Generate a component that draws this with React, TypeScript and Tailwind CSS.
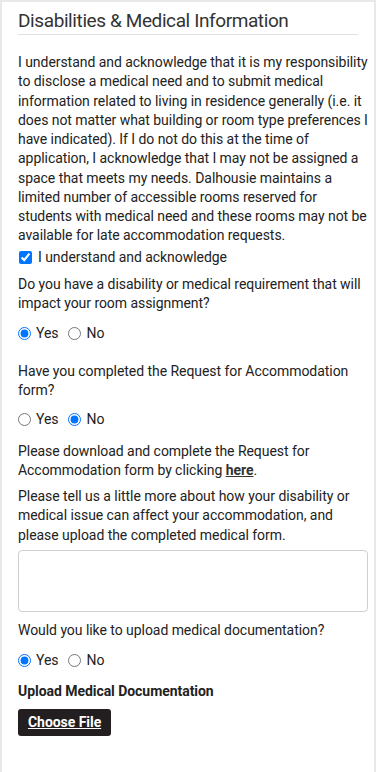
import React from 'react'

const font = { fontFamily: 'Roboto, "Noto Sans", Arial, sans-serif' }

function RadioPair({ name, yes }: { name: string; yes: boolean }) {
  return (
    <div className="flex items-center h-[20px] text-[14px] text-[#222]">
      <label className="flex items-center">
        <input
          type="radio"
          name={name}
          defaultChecked={yes}
          className="m-0 w-[13px] h-[13px] accent-[#0075ff]"
        />
        <span className="ml-[5px]">Yes</span>
      </label>
      <label className="flex items-center ml-[10px]">
        <input
          type="radio"
          name={name}
          defaultChecked={!yes}
          className="m-0 w-[13px] h-[13px] accent-[#0075ff]"
        />
        <span className="ml-[5px]">No</span>
      </label>
    </div>
  )
}

export default function App() {
  return (
    <div className="bg-white w-[380px] h-[772px] overflow-hidden" style={font}>
      <div className="w-[376px] min-h-[772px] border-2 border-b-0 border-[#e8e8e8] pl-[16px] tracking-[-0.05px]">
        <div className="mr-[16px] border-b border-[#e0e0e0] pt-[6px]">
          <h2 className="text-[19px] leading-[26px] text-[#333] font-normal tracking-[-0.4px]">
            Disabilities &amp; Medical Information
          </h2>
        </div>

        <p className="mt-[18px] text-[14px] leading-[19.25px] text-[#222]">
          I understand and acknowledge that it is my responsibility to disclose a medical need and to
          submit medical information related to living in residence generally (i.e. it does not matter
          what building or room type preferences I have indicated). If I do not do this at the time of
          application, I acknowledge that I may not be assigned a space that meets my needs. Dalhousie
          maintains a limited number of accessible rooms reserved for students with medical need and
          these rooms may not be available for late accommodation requests.
        </p>

        <label className="mt-[2px] flex items-center h-[20px] text-[14px] text-[#222]">
          <input
            type="checkbox"
            defaultChecked
            className="m-0 ml-[1px] w-[13px] h-[13px] accent-[#0075ff]"
          />
          <span className="ml-[6px]">I understand and acknowledge</span>
        </label>

        <p className="mt-[7px] text-[14px] leading-[19.25px] text-[#222]">
          Do you have a disability or medical requirement that will impact your room assignment?
        </p>
        <div className="mt-[10px]">
          <RadioPair name="disability" yes />
        </div>

        <p className="mt-[19px] text-[14px] leading-[19.25px] text-[#222]">
          Have you completed the Request for Accommodation form?
        </p>
        <div className="mt-[9px]">
          <RadioPair name="request" yes={false} />
        </div>

        <p className="mt-[12px] text-[14px] leading-[19.25px] text-[#222]">
          Please download and complete the Request for Accommodation form by clicking{' '}
          <a href="#" className="font-bold underline text-[#333]">
            here
          </a>
          .
        </p>

        <p className="mt-[7px] text-[14px] leading-[19.25px] text-[#222]">
          Please tell us a little more about how your disability or medical issue can affect your
          accommodation, and please upload the completed medical form.
        </p>

        <textarea className="mt-[5px] block w-[350px] h-[62px] border border-[#cfcfcf] rounded-[4px] resize-none" />

        <p className="mt-[9px] text-[14px] leading-[19.25px] text-[#222]">
          Would you like to upload medical documentation?
        </p>
        <div className="mt-[10px]">
          <RadioPair name="upload" yes />
        </div>

        <p className="mt-[12px] text-[14px] leading-[19.25px] font-bold text-[#222]">
          Upload Medical Documentation
        </p>

        <button className="mt-[8px] h-[27px] px-[10px] rounded-[3px] bg-[#231f20] text-white text-[14px] font-bold underline">
          Choose File
        </button>
      </div>
    </div>
  )
}
